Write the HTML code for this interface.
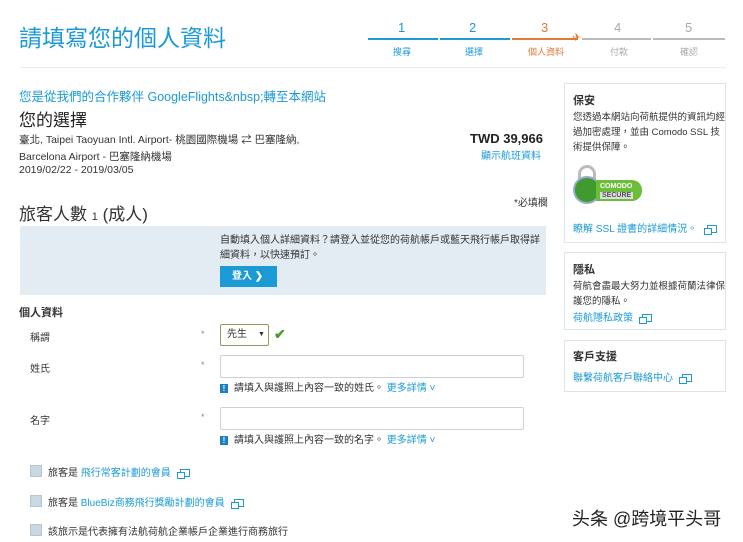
<!DOCTYPE html>
<html><head><meta charset="utf-8"><style>
*{margin:0;padding:0;box-sizing:border-box}
body{width:743px;height:542px;background:#fff;position:relative;overflow:hidden;font-family:"Liberation Sans","Noto Sans CJK TC",sans-serif;color:#333;font-size:11px}
.a{position:absolute;white-space:nowrap}
.b{color:#1b9ad6}
.box{position:absolute;border:1px solid #dde4ea;background:#fff}
.in{position:absolute;border:1px solid #c9d3db;border-radius:2px;background:#fff}
.cb{position:absolute;width:12px;height:12px;background:#c9d8e3;border:1px solid #b5c6d3}
.ext{display:inline-block;width:10px;height:8px;border:1.5px solid #1b9ad6;position:relative;margin-left:5px;vertical-align:middle;background:#fff}
.ext:before{content:"";position:absolute;left:-4px;top:2px;width:6px;height:5px;border:1.5px solid #1b9ad6;background:#fff}
.ic{display:inline-block;width:8px;height:9px;background:#1b7ec6;color:#fff;font-size:8px;line-height:9px;text-align:center;font-weight:bold;margin-right:6px;vertical-align:middle}
</style></head><body>
<div class="a b" style="left:19px;top:19px;font-size:23px">請填寫您的個人資料</div>
<div class="a b" style="left:398px;top:20px;font-size:13px">1</div>
<div class="a b" style="left:469px;top:20px;font-size:13px">2</div>
<div class="a" style="left:541px;top:20px;font-size:13px;color:#e07a3a">3</div>
<div class="a" style="left:614px;top:20px;font-size:13px;color:#aaa">4</div>
<div class="a" style="left:685px;top:20px;font-size:13px;color:#aaa">5</div>
<div class="a" style="left:368px;top:38px;width:70px;height:2px;background:#1b9ad6"></div>
<div class="a" style="left:440px;top:38px;width:70px;height:2px;background:#1b9ad6"></div>
<div class="a" style="left:512px;top:38px;width:66px;height:2px;background:#e07a3a"></div>
<div class="a" style="left:572px;top:31px;font-size:11px;color:#e07a3a">✈</div>
<div class="a" style="left:582px;top:38px;width:69px;height:2px;background:#bbb"></div>
<div class="a" style="left:653px;top:38px;width:72px;height:2px;background:#bbb"></div>
<div class="a b" style="left:393px;top:45px;font-size:9px">搜尋</div>
<div class="a b" style="left:465px;top:45px;font-size:9px">選擇</div>
<div class="a" style="left:528px;top:45px;font-size:9px;color:#e07a3a">個人資料</div>
<div class="a" style="left:610px;top:45px;font-size:9px;color:#aaa">付款</div>
<div class="a" style="left:680px;top:45px;font-size:9px;color:#aaa">確認</div>
<div class="a" style="left:20px;top:67px;width:706px;height:1px;background:#e6ecf0"></div>
<div class="a b" style="left:19px;top:86px;font-size:12.5px">您是從我們的合作夥伴 GoogleFlights&amp;nbsp;轉至本網站</div>
<div class="a" style="left:19px;top:106px;font-size:17px;color:#222">您的選擇</div>
<div class="a" style="left:19px;top:132px;font-size:10.5px">臺北, Taipei Taoyuan Intl. Airport- 桃園國際機場 ⇄ 巴塞隆納,</div>
<div class="a" style="left:19px;top:149px;font-size:10.5px">Barcelona Airport - 巴塞隆納機場</div>
<div class="a" style="left:19px;top:164px;font-size:10.5px">2019/02/22 - 2019/03/05</div>
<div class="a" style="left:470px;top:131px;font-size:13px;font-weight:bold;color:#222">TWD 39,966</div>
<div class="a b" style="left:481px;top:147px;font-size:10px">顯示航班資料</div>
<div class="box" style="left:564px;top:83px;width:162px;height:160px"></div>
<div class="a" style="left:573px;top:92px;font-weight:bold;font-size:11px">保安</div>
<div class="a" style="left:573px;top:110px;font-size:9.5px;line-height:15px;white-space:normal;width:156px">您透過本網站向荷航提供的資訊均經過加密處理，並由 Comodo SSL 技術提供保障。</div>
<div class="a" style="left:578px;top:165px;width:18px;height:18px;border:3px solid #bbb;border-radius:9px 9px 0 0"></div>
<div class="a" style="left:573px;top:176px;width:28px;height:28px;border-radius:50%;background:#3f9b2f;border:2px solid #9ac"></div>
<div class="a" style="left:596px;top:180px;width:46px;height:21px;background:#6cbe3a;border-radius:0 10px 10px 0;color:#fff;font-size:7px;font-weight:bold;line-height:9px;padding:2px 4px">COMODO<br><span style="background:#ddd;color:#555;padding:0 2px">SECURE</span></div>
<div class="a b" style="left:573px;top:220px;font-size:10px">瞭解 SSL 證書的詳細情況。<span class="ext" style="margin-left:10px"></span></div>
<div class="box" style="left:564px;top:252px;width:162px;height:78px"></div>
<div class="a" style="left:573px;top:261px;font-weight:bold">隱私</div>
<div class="a" style="left:573px;top:279px;font-size:9.5px;line-height:15px;white-space:normal;width:156px">荷航會盡最大努力並根據荷蘭法律保護您的隱私。</div>
<div class="a b" style="left:573px;top:309px;font-size:10px">荷航隱私政策<span class="ext" style="margin-left:9px"></span></div>
<div class="box" style="left:564px;top:340px;width:162px;height:52px"></div>
<div class="a" style="left:573px;top:348px;font-weight:bold">客戶支援</div>
<div class="a b" style="left:573px;top:369px;font-size:10px">聯繫荷航客戶聯絡中心<span class="ext" style="margin-left:9px"></span></div>
<div class="a" style="left:19px;top:200px;font-size:17px;color:#333">旅客人數 <span style="font-size:11px">1</span> (成人)</div>
<div class="a" style="left:514px;top:194px;font-size:10px">*必填欄</div>
<div class="a" style="left:20px;top:226px;width:526px;height:69px;background:#e4ecf3"></div>
<div class="a" style="left:220px;top:233px;font-size:10px;line-height:15px">自動填入個人詳細資料？請登入並從您的荷航帳戶或藍天飛行帳戶取得詳<br>細資料，以快速預訂。</div>
<div class="a" style="left:220px;top:266px;width:57px;height:21px;background:#1b9ad6;color:#fff;font-weight:bold;font-size:10px;line-height:21px;padding-left:12px">登入 ❯</div>
<div class="a" style="left:19px;top:304px;font-weight:bold;font-size:11px">個人資料</div>
<div class="a" style="left:30px;top:329px;font-size:10px">稱謂</div>
<div class="a" style="left:201px;top:329px;color:#888;font-size:9px">*</div>
<div class="in" style="left:220px;top:324px;width:49px;height:22px;border-color:#8c9d5a;font-size:10px;line-height:20px;padding-left:6px">先生<span style="position:absolute;left:37px;top:0;font-size:7px">▼</span></div>
<div class="a" style="left:274px;top:326px;color:#4a9b2a;font-size:14px;font-weight:bold">✔</div>
<div class="a" style="left:30px;top:360px;font-size:10px">姓氏</div>
<div class="a" style="left:201px;top:360px;color:#888;font-size:9px">*</div>
<div class="in" style="left:220px;top:355px;width:304px;height:23px"></div>
<div class="a" style="left:220px;top:379px;font-size:10px"><span class="ic">!</span>請填入與護照上內容一致的姓氏。 <span class="b">更多詳情 ˅</span></div>
<div class="a" style="left:30px;top:412px;font-size:10px">名字</div>
<div class="a" style="left:201px;top:412px;color:#888;font-size:9px">*</div>
<div class="in" style="left:220px;top:407px;width:304px;height:23px"></div>
<div class="a" style="left:220px;top:431px;font-size:10px"><span class="ic">!</span>請填入與護照上內容一致的名字。 <span class="b">更多詳情 ˅</span></div>
<div class="cb" style="left:30px;top:465px"></div>
<div class="a" style="left:48px;top:464px;font-size:10px">旅客是 <span class="b">飛行常客計劃的會員</span><span class="ext" style="margin-left:9px"></span></div>
<div class="cb" style="left:30px;top:495px"></div>
<div class="a" style="left:48px;top:494px;font-size:10px">旅客是 <span class="b">BlueBiz商務飛行獎勵計劃的會員</span><span class="ext" style="margin-left:9px"></span></div>
<div class="cb" style="left:30px;top:524px"></div>
<div class="a" style="left:48px;top:523px;font-size:10px">該旅示是代表擁有法航荷航企業帳戶企業進行商務旅行</div>
<div class="a" style="left:572px;top:505px;font-size:18px;color:#222">头条 @跨境平头哥</div>
</body></html>
